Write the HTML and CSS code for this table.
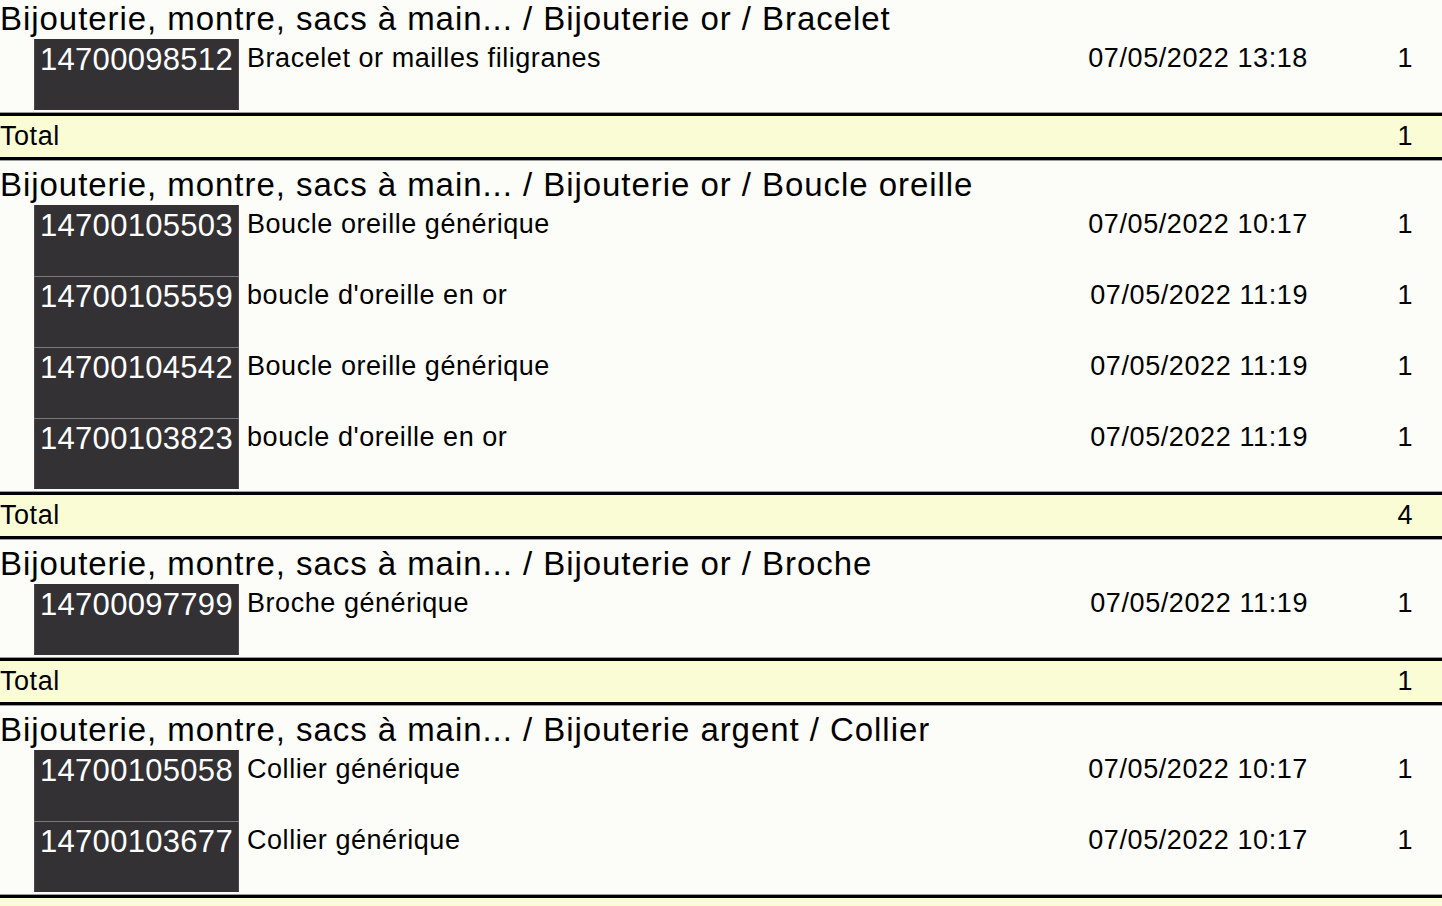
FILE: index.html
```html
<!DOCTYPE html>
<html lang="fr">
<head>
<meta charset="utf-8">
<title>Rapport</title>
<link rel="stylesheet" href="styles.css">
</head>
<body>
<div class="report">
  <section class="group">
    <div class="group-title">Bijouterie, montre, sacs à main... / Bijouterie or / Bracelet</div>
    <div class="item"><span class="code">14700098512</span><span class="desc">Bracelet or mailles filigranes</span><span class="date">07/05/2022 13:18</span><span class="qty">1</span></div>
    <div class="total"><span class="total-label">Total</span><span class="qty">1</span></div>
  </section>
  <section class="group">
    <div class="group-title">Bijouterie, montre, sacs à main... / Bijouterie or / Boucle oreille</div>
    <div class="item"><span class="code">14700105503</span><span class="desc">Boucle oreille générique</span><span class="date">07/05/2022 10:17</span><span class="qty">1</span></div>
    <div class="item"><span class="code">14700105559</span><span class="desc">boucle d'oreille en or</span><span class="date">07/05/2022 11:19</span><span class="qty">1</span></div>
    <div class="item"><span class="code">14700104542</span><span class="desc">Boucle oreille générique</span><span class="date">07/05/2022 11:19</span><span class="qty">1</span></div>
    <div class="item"><span class="code">14700103823</span><span class="desc">boucle d'oreille en or</span><span class="date">07/05/2022 11:19</span><span class="qty">1</span></div>
    <div class="total"><span class="total-label">Total</span><span class="qty">4</span></div>
  </section>
  <section class="group">
    <div class="group-title">Bijouterie, montre, sacs à main... / Bijouterie or / Broche</div>
    <div class="item"><span class="code">14700097799</span><span class="desc">Broche générique</span><span class="date">07/05/2022 11:19</span><span class="qty">1</span></div>
    <div class="total"><span class="total-label">Total</span><span class="qty">1</span></div>
  </section>
  <section class="group">
    <div class="group-title">Bijouterie, montre, sacs à main... / Bijouterie argent / Collier</div>
    <div class="item"><span class="code">14700105058</span><span class="desc">Collier générique</span><span class="date">07/05/2022 10:17</span><span class="qty">1</span></div>
    <div class="item"><span class="code">14700103677</span><span class="desc">Collier générique</span><span class="date">07/05/2022 10:17</span><span class="qty">1</span></div>
    <div class="total"><span class="total-label">Total</span><span class="qty">2</span></div>
  </section>
</div>
</body>
</html>
```

FILE: styles.css
```css
html {
  overflow: hidden;
}
body {
  margin: 0;
  background: #fcfdf9;
  color: #000;
  font-family: "Liberation Sans", Arial, Helvetica, sans-serif;
}
.report {
  margin-top: -5px;
}
.group-title {
  height: 44px;
  box-sizing: border-box;
  padding-top: 4px;
  font-size: 33px;
  line-height: 40px;
  letter-spacing: 0.95px;
  white-space: nowrap;
}
.item {
  display: grid;
  grid-template-columns: 34px 205px 1fr auto 134px;
  height: 71px;
  font-size: 27px;
  letter-spacing: 0.55px;
}
.code {
  grid-column: 2;
  background: #333134;
  color: #fff;
  font-size: 31px;
  line-height: 38px;
  padding: 2px 0 0 6px;
  letter-spacing: 0.3px;
  box-shadow: inset 1px 0 0 #4a484b, inset -1px 0 0 #4a484b;
}
.item + .item .code {
  border-top: 1px solid #7a797b;
  padding-top: 1px;
}
.desc {
  grid-column: 3;
  padding: 3px 0 0 8px;
  line-height: 32px;
  white-space: nowrap;
}
.date {
  grid-column: 4;
  padding-top: 3px;
  line-height: 32px;
  letter-spacing: 0.6px;
  white-space: nowrap;
}
.qty {
  text-align: right;
  padding-right: 29px;
}
.item .qty {
  grid-column: 5;
  padding-top: 3px;
  line-height: 32px;
}
.total {
  position: relative;
  display: flex;
  justify-content: space-between;
  margin-top: 2px;
  height: 41px;
  background: #fafcd5;
  border-top: 4px solid #000;
  border-bottom: 4px solid #000;
  font-size: 27px;
  line-height: 41px;
  letter-spacing: 0.55px;
}
.total::before,
.total::after {
  content: "";
  position: absolute;
  left: 0;
  right: 0;
  height: 1px;
  background: #9c9c9c;
}
.total::before {
  top: -4px;
}
.total::after {
  bottom: -4px;
}
```
